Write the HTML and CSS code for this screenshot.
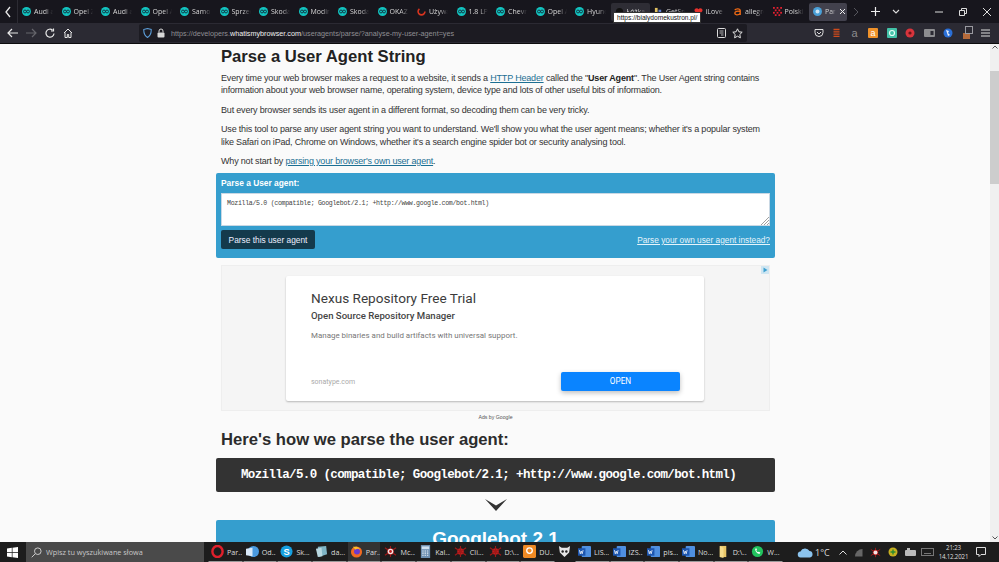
FILE: index.html
```html
<!DOCTYPE html>
<html lang="pl">
<head>
<meta charset="utf-8">
<title>Parse a User Agent String</title>
<link rel="stylesheet" href="styles.css">
</head>
<body>
<svg class="defs" width="0" height="0">
  <symbol id="fav" viewBox="0 0 10 10"><circle cx="5" cy="5" r="5" fill="#12c4c0"/><circle cx="3.3" cy="5" r="1.6" fill="none" stroke="#123" stroke-width=".9"/><circle cx="6.7" cy="5" r="1.6" fill="none" stroke="#123" stroke-width=".9"/></symbol>
  <symbol id="word" viewBox="0 0 14 14"><rect x="4" y="1" width="10" height="12" rx="1" fill="#4f8fe0"/><rect x="0" y="3.5" width="8" height="8" fill="#1d56b0"/><path d="M1.500 5.500l1 4 1-3 1 3 1-4" fill="none" stroke="#fff" stroke-width=".8"/></symbol>
  <symbol id="bug" viewBox="0 0 14 14"><circle cx="7" cy="7" r="3.500" fill="#c21f1f"/><path d="M1 3l12 8M1 11L13 3M7 1v12" stroke="#a01818" stroke-width="1.200"/></symbol>
</svg>

<header class="tabbar">
  <svg class="tab-back" width="8" height="12" viewBox="0 0 8 12"><path d="M6 1L2 6l4 5" fill="none" stroke="#e8e8e8" stroke-width="1.300"/></svg>
  <div class="tabs">
    <div class="tab"><svg class="fav"><use href="#fav"/></svg><span>Audi a</span></div>
    <div class="tab"><svg class="fav"><use href="#fav"/></svg><span>Opel Z</span></div>
    <div class="tab"><svg class="fav"><use href="#fav"/></svg><span>Audi a</span></div>
    <div class="tab"><svg class="fav"><use href="#fav"/></svg><span>Opel A</span></div>
    <div class="tab"><svg class="fav"><use href="#fav"/></svg><span>Samoc</span></div>
    <div class="tab"><svg class="fav"><use href="#fav"/></svg><span>Sprzed</span></div>
    <div class="tab"><svg class="fav"><use href="#fav"/></svg><span>Skoda</span></div>
    <div class="tab"><svg class="fav"><use href="#fav"/></svg><span>Modin</span></div>
    <div class="tab"><svg class="fav"><use href="#fav"/></svg><span>Skoda</span></div>
    <div class="tab"><svg class="fav"><use href="#fav"/></svg><span>OKAZ</span></div>
    <div class="tab"><svg class="fav" viewBox="0 0 10 10"><circle cx="5" cy="5" r="3.800" fill="none" stroke="#d8341f" stroke-width="1.800" stroke-dasharray="15 9"/></svg><span>Używa</span></div>
    <div class="tab"><svg class="fav"><use href="#fav"/></svg><span>1.8 LP</span></div>
    <div class="tab"><svg class="fav"><use href="#fav"/></svg><span>Chevr</span></div>
    <div class="tab"><svg class="fav"><use href="#fav"/></svg><span>Opel A</span></div>
    <div class="tab"><svg class="fav"><use href="#fav"/></svg><span>Hyund</span></div>
    <div class="tab tab-hover"><svg class="fav" viewBox="0 0 10 10"><circle cx="5" cy="5" r="4" fill="#111"/></svg><span>Łóżka</span></div>
    <div class="tab"><svg class="fav" viewBox="0 0 10 10"><rect x="1" y="1" width="3" height="8" fill="#e0c060"/><rect x="5" y="3" width="3" height="6" fill="#6080d0"/></svg><span>GetSn</span></div>
    <div class="tab"><svg class="fav" viewBox="0 0 10 10"><path d="M5 9L1 5a2.300 2.300 0 0 1 4-2.500A2.300 2.300 0 0 1 9 5z" fill="#e5322d"/></svg><span>iLove</span></div>
    <div class="tab"><svg class="fav" viewBox="0 0 10 10"><path d="M2 3.500C3 1.500 8 1.500 8 4v5M8 5C5 4 2 5 2 7s4 2.500 6 0" fill="none" stroke="#ef6a14" stroke-width="1.500"/></svg><span>allegro</span></div>
    <div class="tab"><svg class="fav" viewBox="0 0 10 10"><g fill="#e02030"><rect x="0" y="0" width="2" height="2"/><rect x="4" y="0" width="2" height="2"/><rect x="8" y="0" width="2" height="2"/><rect x="2" y="2.700" width="2" height="2"/><rect x="6" y="2.700" width="2" height="2"/><rect x="0" y="5.400" width="2" height="2"/><rect x="4" y="5.400" width="2" height="2"/><rect x="8" y="5.400" width="2" height="2"/><rect x="2" y="8" width="2" height="2"/><rect x="6" y="8" width="2" height="2"/></g></svg><span>Polski</span></div>
    <div class="tab tab-active"><svg class="fav" viewBox="0 0 10 10"><circle cx="5" cy="5" r="5" fill="#4aa0d8"/><circle cx="5" cy="5" r="2.200" fill="#cfe6f5"/></svg><span>Par</span><svg class="tab-x" width="7" height="7" viewBox="0 0 7 7"><path d="M1 1l5 5M6 1L1 6" stroke="#eee" stroke-width="1"/></svg></div>
  </div>
  <div class="tab-tools">
    <svg width="6" height="10" viewBox="0 0 6 10"><path d="M1 1l4 4-4 4" fill="none" stroke="#55555c" stroke-width="1"/></svg>
    <svg width="9" height="9" viewBox="0 0 9 9"><path d="M4.500 0v9M0 4.500h9" stroke="#eee" stroke-width="1.200"/></svg>
    <svg width="8" height="6" viewBox="0 0 8 6"><path d="M1 1l3 3 3-3" fill="none" stroke="#ddd" stroke-width="1.100"/></svg>
  </div>
  <div class="win-controls">
    <svg width="8" height="8" viewBox="0 0 8 8"><path d="M0 4h8" stroke="#ddd"/></svg>
    <svg width="8" height="8" viewBox="0 0 8 8"><path d="M.5 2.500h5v5h-5zM2.500 2V.5h5v5H6" fill="none" stroke="#ddd"/></svg>
    <svg width="8" height="8" viewBox="0 0 8 8"><path d="M0 0l8 8M8 0L0 8" stroke="#ddd"/></svg>
  </div>
</header>

<nav class="toolbar">
  <div class="nav-btns">
    <svg width="11" height="10" viewBox="0 0 11 10"><path d="M5 1L1 5l4 4M1 5h10" fill="none" stroke="#e8e8e8" stroke-width="1.200"/></svg>
    <svg width="11" height="10" viewBox="0 0 11 10"><path d="M6 1l4 4-4 4M10 5H0" fill="none" stroke="#66666c" stroke-width="1.200"/></svg>
    <svg width="10" height="10" viewBox="0 0 10 10"><path d="M9 5.500A4 4 0 1 1 7.500 2M8.500 .5v2.500H6" fill="none" stroke="#e8e8e8" stroke-width="1.200"/></svg>
    <svg width="10" height="10" viewBox="0 0 10 10"><path d="M1 5l4-4 4 4M2 4.500V9.500h2.300V6.500h1.400v3H8V4.500" fill="none" stroke="#e8e8e8" stroke-width="1"/></svg>
  </div>
  <div class="urlbar">
    <svg class="shield" width="9" height="10" viewBox="0 0 9 10"><path d="M.8 1.500L4.500.5l3.700 1c.2 3.500-.8 6.200-3.700 8C1.600 7.700.6 5 .8 1.500z" fill="none" stroke="#5b9bd5" stroke-width="1.100"/></svg>
    <svg class="lock" width="8" height="10" viewBox="0 0 8 10"><rect x=".5" y="4.500" width="7" height="5" rx="1" fill="#d8d8d8"/><path d="M2 4.500V3a2 2 0 0 1 4 0v1.500" fill="none" stroke="#d8d8d8"/></svg>
    <span class="url">https://developers.<b>whatismybrowser.com</b>/useragents/parse/?analyse-my-user-agent=yes</span>
    <svg class="reader" width="9" height="10" viewBox="0 0 9 10"><rect x=".5" y=".5" width="8" height="9" rx="1" fill="none" stroke="#ddd"/><path d="M2.500 3h4M2.500 5h4M4 7h2.500" stroke="#ddd" stroke-width=".8"/></svg>
    <svg class="star" width="11" height="11" viewBox="0 0 11 11"><path d="M5.500.8l1.400 3 3.300.4-2.400 2.300.6 3.300-2.900-1.600-2.900 1.600.6-3.300L.8 4.200l3.300-.4z" fill="none" stroke="#e6e6e6"/></svg>
  </div>
  <div class="extensions">
    <svg width="10" height="10" viewBox="0 0 10 10"><path d="M1 1.500h8v3a4 4 0 0 1-8 0z" fill="none" stroke="#ddd"/><path d="M3 4l2 2 2-2" fill="none" stroke="#ddd"/></svg>
    <svg width="9" height="10" viewBox="0 0 9 10"><path d="M1.500 1.500h6M1.500 3.800h6M1.500 6.100h6M1.500 8.400h6" stroke="#cf4b1c" stroke-width="1.300"/></svg>
    <span class="ext-a">a</span>
    <span class="ext-box ext-orange">a</span>
    <svg width="10" height="10" viewBox="0 0 10 10"><rect width="10" height="10" rx="1" fill="#43c2a8"/><circle cx="5" cy="5" r="2.500" fill="none" stroke="#e8fff8" stroke-width="1.200"/></svg>
    <svg width="10" height="10" viewBox="0 0 10 10"><circle cx="5" cy="5" r="4.500" fill="#d8343c"/><circle cx="5" cy="5" r="1.600" fill="#6a1418"/></svg>
    <svg width="11" height="8" viewBox="0 0 11 8"><rect width="11" height="8" rx="1" fill="#8d8d90"/><rect x="6.500" y="2" width="3" height="4" fill="#2b2a33"/></svg>
    <svg width="10" height="10" viewBox="0 0 10 10"><circle cx="5" cy="5" r="4.500" fill="#2a6fd6"/><path d="M3 2l3 1-1 2 2 2-2 1-1-3z" fill="#e6eefc"/></svg>
    <svg width="11" height="14" viewBox="0 0 11 14"><rect x="1" y="7" width="7" height="6" fill="#b56a3a"/><rect x="3.500" y=".5" width="7" height="7" fill="none" stroke="#9a9aa0"/></svg>
    <svg class="menu" width="9" height="8" viewBox="0 0 9 8"><path d="M0 1h9M0 4h9M0 7h9" stroke="#ddd" stroke-width="1.100"/></svg>
  </div>
</nav>

<div class="viewport">
  <main class="page">
    <h1>Parse a User Agent String</h1>
    <p>Every time your web browser makes a request to a website, it sends a <a href="#">HTTP Header</a> called the "<b>User Agent</b>". The User Agent string contains information about your web browser name, operating system, device type and lots of other useful bits of information.</p>
    <p>But every browser sends its user agent in a different format, so decoding them can be very tricky.</p>
    <p>Use this tool to parse any user agent string you want to understand. We'll show you what the user agent means; whether it's a popular system like Safari on iPad, Chrome on Windows, whether it's a search engine spider bot or security analysing tool.</p>
    <p>Why not start by <a href="#">parsing your browser's own user agent</a>.</p>

    <form class="parser">
      <label class="parser-label">Parse a User agent:</label>
      <div class="ua-input">Mozilla/5.0 (compatible; Googlebot/2.1; +http://www.google.com/bot.html)
        <svg class="grip" width="8" height="8" viewBox="0 0 8 8"><path d="M8 0L0 8M8 3L3 8M8 6L6 8" stroke="#888" stroke-width=".8"/></svg>
      </div>
      <div class="parser-actions">
        <button class="parse-btn" type="button">Parse this user agent</button>
        <a class="own-link" href="#">Parse your own user agent instead?</a>
      </div>
    </form>

    <section class="ad">
      <svg class="ad-badge" width="8" height="8" viewBox="0 0 8 8"><rect width="8" height="8" fill="#cfe6f2"/><path d="M2.500 1.500L6.500 4l-4 2.500z" fill="#3fa0d0"/></svg>
      <div class="ad-card">
        <div class="ad-title">Nexus Repository Free Trial</div>
        <div class="ad-sub">Open Source Repository Manager</div>
        <div class="ad-desc">Manage binaries and build artifacts with universal support.</div>
        <div class="ad-foot">
          <span class="ad-domain">sonatype.com</span>
          <span class="ad-open">OPEN</span>
        </div>
      </div>
    </section>
    <div class="ad-note">Ads by Google</div>

    <h2>Here's how we parse the user agent:</h2>
    <div class="ua-dark">Mozilla/5.0 (compatible; Googlebot/2.1; +http://www.google.com/bot.html)</div>
    <svg class="chevron" width="22" height="12" viewBox="0 0 22 12"><path d="M0 0l11 6.500L22 0 11 12z" fill="#333"/></svg>
    <div class="result">Googlebot 2.1</div>
  </main>
  <aside class="scrollbar">
    <svg class="scroll-arrow" width="6" height="4" viewBox="0 0 6 4"><path d="M.5 3.500L3 1l2.500 2.500" fill="none" stroke="#555"/></svg>
    <span class="scroll-thumb"></span>
    <svg class="scroll-arrow scroll-arrow-end" width="6" height="4" viewBox="0 0 6 4"><path d="M.5.5L3 3 5.500.5" fill="none" stroke="#555"/></svg>
  </aside>
</div>

<footer class="taskbar">
  <svg class="start" width="11" height="11" viewBox="0 0 11 11"><path d="M0 1.500L4.800.8v4.400H0zM5.500.7L11 0v5.200H5.500zM0 5.900h4.800v4.300L0 9.500zM5.500 5.900H11V11l-5.500-.8z" fill="#fff"/></svg>
  <div class="search">
    <svg width="11" height="11" viewBox="0 0 11 11"><circle cx="6.800" cy="4.200" r="3.300" fill="none" stroke="#ccc"/><path d="M4.300 6.700L.7 10.300" stroke="#ccc"/></svg>
    <span>Wpisz tu wyszukiwane słowa</span>
  </div>
  <div class="task-items">
    <div class="task"><svg viewBox="0 0 14 14"><ellipse cx="7" cy="7" rx="5.500" ry="6" fill="none" stroke="#e0202c" stroke-width="2.600"/></svg><span>Par...</span></div>
    <div class="task"><svg viewBox="0 0 14 14"><circle cx="8" cy="7" r="6" fill="#4a9ae0"/><path d="M0 4l7-1v9l-7-1z" fill="#d8e8f8"/></svg><span>Od...</span></div>
    <div class="task"><svg viewBox="0 0 14 14"><circle cx="7" cy="7" r="6.500" fill="#16a0e0"/><text x="7" y="10.500" text-anchor="middle" class="svg-s">S</text></svg><span>Sk...</span></div>
    <div class="task"><svg viewBox="0 0 14 14"><path d="M3 2l9-1 1 9-9 3z" fill="#7fb4c4"/><path d="M1 4l6-1 1 9-5 1z" fill="#b8d8e0"/></svg><span>da...</span></div>
    <div class="task task-on"><svg viewBox="0 0 14 14"><circle cx="7" cy="7.500" r="6" fill="#f26a21"/><circle cx="7.500" cy="7" r="3.200" fill="#6a3ad0"/><path d="M3 2c2 0 6-1 8 3-2-1.500-4-1-5 0z" fill="#fcbf2a"/></svg><span>Par...</span></div>
    <div class="task"><svg viewBox="0 0 14 14"><use href="#bug"/><circle cx="7" cy="7" r="3" fill="#f4e4e4"/><circle cx="7" cy="7" r="1.500" fill="#c21f1f"/></svg><span>Mc...</span></div>
    <div class="task"><svg viewBox="0 0 14 14"><rect x="2" y="0" width="10" height="14" fill="#6d8fb0"/><rect x="3" y="1.500" width="8" height="3" fill="#cfe0f0"/><path d="M3.500 6.500h7M3.500 8.800h7M3.500 11h7" stroke="#e6eef6" stroke-width="1.200" stroke-dasharray="1.500 1"/></svg><span>Kal...</span></div>
    <div class="task"><svg viewBox="0 0 14 14"><use href="#bug"/></svg><span>Cli...</span></div>
    <div class="task"><svg viewBox="0 0 14 14"><use href="#bug"/></svg><span>D:\...</span></div>
    <div class="task"><svg viewBox="0 0 14 14"><rect width="14" height="14" rx="1.500" fill="#f08a24"/><circle cx="7" cy="6" r="3" fill="none" stroke="#fff" stroke-width="1.400"/></svg><span>DU...</span></div>
    <div class="task task-solo"><svg viewBox="0 0 14 14"><path d="M1 1l3 2h6l3-2-1 7-5 5-5-5z" fill="#e6e6e6"/><circle cx="5" cy="7" r="1.300" fill="#222"/><circle cx="9" cy="7" r="1.300" fill="#222"/></svg></div>
    <div class="task"><svg viewBox="0 0 14 14"><use href="#word"/></svg><span>LIS...</span></div>
    <div class="task"><svg viewBox="0 0 14 14"><use href="#word"/></svg><span>IZS...</span></div>
    <div class="task"><svg viewBox="0 0 14 14"><use href="#word"/></svg><span>pis...</span></div>
    <div class="task"><svg viewBox="0 0 14 14"><use href="#word"/></svg><span>No...</span></div>
    <div class="task"><svg viewBox="0 0 14 14"><path d="M3 1h7v12H3z" fill="#e8c668"/><path d="M3 1l4 2v11l-4-1z" fill="#f5dc8c"/></svg><span>D:\...</span></div>
    <div class="task"><svg viewBox="0 0 14 14"><circle cx="7" cy="7" r="6" fill="#22c35e"/><path d="M4.500 4c0 3 2 5.500 5 5.500l.5-1.500-1.800-.8-.7.7c-.9-.4-1.500-1.200-1.800-2l.7-.7L5.800 3.500z" fill="#fff"/></svg><span>W...</span></div>
  </div>
  <div class="tray">
    <svg class="cloud" width="17" height="11" viewBox="0 0 17 11"><path d="M4 10.500a3 3 0 0 1-.5-6A5 5 0 0 1 12.500 4 3.300 3.300 0 0 1 13 10.500z" fill="#8cc4ee"/></svg>
    <span class="temp">1°C</span>
    <svg class="caret" width="8" height="5" viewBox="0 0 8 5"><path d="M.5 4.500L4 1l3.500 3.500" fill="none" stroke="#ddd"/></svg>
    <svg width="9" height="9" viewBox="0 0 9 9"><path d="M1 8.500A7.500 7.500 0 0 1 8.500 1v7.500z" fill="#666"/></svg>
    <svg width="11" height="11" viewBox="0 0 14 14"><use href="#bug"/><circle cx="7" cy="7" r="2.500" fill="#f4e4e4"/></svg>
    <svg width="10" height="10" viewBox="0 0 10 10"><circle cx="5" cy="5" r="4.500" fill="#c8b020"/><path d="M5 2.500v5M2.500 5h5" stroke="#2a8a30" stroke-width="1.400"/></svg>
    <svg width="11" height="8" viewBox="0 0 11 8"><rect y="2" width="11" height="6" rx="1" fill="#bbb"/><rect x="2" y="0" width="3" height="2" fill="#bbb"/></svg>
    <svg class="kbd" width="13" height="8" viewBox="0 0 13 8"><rect x=".5" y=".5" width="12" height="7" fill="none" stroke="#777"/><path d="M3 5.500h7" stroke="#777"/></svg>
    <div class="clock"><span>21:23</span><span>14.12.2021</span></div>
    <svg class="notify" width="10" height="10" viewBox="0 0 10 10"><path d="M.5.500h9v7H5L3 9.500v-2H.5z" fill="none" stroke="#ddd"/></svg>
  </div>
</footer>

<div class="tooltip">https://bialydomekustron.pl/</div>
</body>
</html>
```

FILE: styles.css
```css
* { box-sizing: border-box; }
html, body { margin: 0; height: 100%; }
body {
  position: relative;
  width: 999px;
  height: 562px;
  overflow: hidden;
  display: flex;
  flex-direction: column;
  font-family: "Liberation Sans", Arial, sans-serif;
  background: #fafafa;
  color: #333;
}
.defs { position: absolute; }
svg { display: block; flex: none; }

/* Tab strip */
.tabbar {
  height: 23px;
  flex: none;
  display: flex;
  align-items: center;
  background: #17161d;
  color: #d8d8d8;
  font-family: "Open Sans", sans-serif;
  font-size: 7px;
}
.tab-back { margin: 0 5px 0 4px; }
.tabs { display: flex; align-items: center; height: 100%; border-left: 1px solid #2c2b33; }
.tab {
  width: 39.500px;
  height: 18px;
  display: flex;
  align-items: center;
  gap: 3px;
  padding-left: 4px;
  border-radius: 2px;
  overflow: hidden;
  white-space: nowrap;
}
.tab span { width: 19px; overflow: hidden; -webkit-mask-image: linear-gradient(90deg, #000 55%, transparent); mask-image: linear-gradient(90deg, #000 55%, transparent); }
.fav { width: 9px; height: 9px; }
.tab-hover { background: #2e2d35; }
.tab-active { background: #42414d; width: 38px; margin-left: 1px; }
.tab-active span { width: 11px; }
.tab-tools { display: flex; align-items: center; gap: 12px; margin-left: 6px; }
.win-controls { display: flex; align-items: center; gap: 16px; margin-left: auto; margin-right: 8px; }

/* Toolbar */
.toolbar {
  height: 21px;
  flex: none;
  display: flex;
  align-items: center;
  background: #2b2a33;
  border-bottom: 1px solid #0c0c0d;
}
.nav-btns { width: 139px; display: flex; align-items: center; gap: 8px; padding-left: 7px; }
.urlbar {
  width: 608px;
  height: 18px;
  display: flex;
  align-items: center;
  background: #1c1b22;
  border-radius: 2px;
  padding-left: 4px;
  padding-right: 4px;
}
.lock { margin-left: 5px; }
.url {
  margin-left: 6px;
  flex: 1;
  font-family: "Liberation Sans", sans-serif;
  font-size: 7.220px;
  color: #8f8f93;
  white-space: nowrap;
}
.url b { font-weight: 400; color: #f0f0f0; }
.star { margin-left: 6px; }
.extensions { flex: 1; display: flex; align-items: center; justify-content: flex-end; gap: 8.500px; padding-right: 9px; font-family: "Liberation Sans", sans-serif; }
.ext-a { color: #8d8d90; font-size: 11px; width: 10px; text-align: center; line-height: 10px; }
.ext-box { width: 10px; height: 10px; border-radius: 1px; font-size: 9px; line-height: 10px; text-align: center; }
.ext-orange { background: #f0922a; color: #fff; }

/* Page */
.viewport { flex: 1; min-height: 0; display: flex; overflow: hidden; background: #fafafa; }
.page { width: 559px; margin-left: 216px; flex: none; }
.scrollbar {
  width: 9px;
  margin-left: auto;
  padding-top: 27px;
  position: relative;
  background: #f0f0f0;
}
.scroll-thumb { display: block; height: 113px; background: #cdcdcd; }
.scroll-arrow { position: absolute; left: 1.500px; top: 1px; }
.scroll-arrow-end { top: auto; bottom: 2px; }

h1 { margin: 0; padding: 2px 5px 0; font-size: 16.650px; line-height: 21px; color: #222; }
p { margin: 0 0 6.500px; padding: 0 5px; font-size: 9px; letter-spacing: -.18px; line-height: 12.800px; color: #333; }
h1 + p { margin-top: 4.500px; }
a { color: #1c6f93; }
p b { color: #222; }

.parser {
  height: 85px;
  margin-top: -1px;
  padding: 5px 5px 0;
  background: #359ece;
  border-radius: 2px;
}
.parser-label { display: block; color: #fff; font-weight: 700; font-size: 8.400px; line-height: 11px; }
.ua-input {
  position: relative;
  margin-top: 4px;
  height: 33px;
  padding: 5px;
  background: #fff;
  border: 1px solid #c9d8e4;
  font-family: "Liberation Mono", monospace;
  font-size: 6.600px;
  letter-spacing: -.32px;
  line-height: 9px;
  color: #444;
}
.grip { position: absolute; right: 0; bottom: 0; }
.parser-actions { margin-top: 4px; display: flex; justify-content: space-between; align-items: center; }
.parse-btn {
  width: 94px;
  height: 19px;
  padding: 0;
  background: #143a4c;
  border: 0;
  border-radius: 2px;
  color: #eef;
  font-family: "Liberation Sans", sans-serif;
  font-size: 8.350px;
}
.own-link { color: #e6f4fb; font-size: 8.300px; }

.ad {
  position: relative;
  margin: 7px 5px 0;
  height: 146px;
  padding-top: 10px;
  background: #f5f5f5;
  border: 1px solid #eeeeee;
}
.ad-badge { position: absolute; right: 0; top: 0; }
.ad-card {
  width: 418px;
  height: 125px;
  margin-left: 64px;
  padding: 14px 25px 0;
  background: #fff;
  border-radius: 2px;
  box-shadow: 0 1px 2px rgba(0,0,0,.25);
  display: flex;
  flex-direction: column;
  font-family: "Roboto", sans-serif;
}
.ad-title { font-size: 13.600px; line-height: 16px; color: #3c3c3c; }
.ad-sub { margin-top: 4px; font-size: 9.600px; line-height: 12px; font-weight: 500; color: #444; }
.ad-desc { margin-top: 8px; font-size: 7.950px; line-height: 11px; color: #777; }
.ad-foot { margin-top: auto; margin-bottom: 10px; display: flex; justify-content: space-between; align-items: center; }
.ad-domain { font-size: 7px; color: #aaa; }
.ad-open {
  width: 119px;
  height: 19px;
  margin-right: -1px;
  line-height: 19px;
  text-align: center;
  background: #0a84ff;
  border-radius: 2px;
  color: #fff;
  font-size: 8.200px;
  box-shadow: 0 2px 5px rgba(0,0,0,.25);
}
.ad-note { margin-top: 2px; text-align: center; font-size: 5.200px; line-height: 8px; color: #555; }

h2 { margin: 8px 0 0; padding: 0 5px; font-size: 16.650px; line-height: 21px; color: #2c2c2c; }
.ua-dark {
  margin-top: 8px;
  height: 34px;
  padding-right: 14px;
  line-height: 34px;
  text-align: center;
  background: #333;
  border-radius: 2px;
  color: #fff;
  font-family: "Liberation Mono", monospace;
  font-weight: 700;
  font-size: 12.500px;
  letter-spacing: -.625px;
  white-space: nowrap;
}
.chevron { margin: 7px auto 9px; }
.result {
  height: 60px;
  padding-top: 6px;
  text-align: center;
  background: #359ece;
  color: #fff;
  font-size: 19px;
  line-height: 26px;
  font-weight: 700;
  border-radius: 2px 2px 0 0;
}

/* Taskbar */
.taskbar {
  height: 20px;
  flex: none;
  display: flex;
  align-items: center;
  background: #1d1d1d;
  color: #dcdcdc;
  font-family: "Open Sans", sans-serif;
  font-size: 7.200px;
}
.start { margin-left: 7px; margin-right: 8px; }
.search {
  width: 178px;
  height: 100%;
  display: flex;
  align-items: center;
  gap: 4px;
  padding-left: 5px;
  background: #4a4a4a;
  color: #c8c8c8;
  font-size: 7.300px;
}
.task-items { display: flex; height: 100%; margin-left: 4px; }
.task {
  width: 34.700px;
  height: 100%;
  display: flex;
  align-items: center;
  gap: 3px;
  padding-left: 2px;
  border-bottom: 1px solid #9a9a9a;
  border-left: 1px solid #1d1d1d;
  border-right: 1px solid #1d1d1d;
  white-space: nowrap;
  overflow: hidden;
}
.task svg { width: 13px; height: 13px; }
.task-on { background: #333; }
.task-solo { width: 20px; border-bottom-color: transparent; }
.svg-s { fill: #fff; font-family: "Liberation Sans", sans-serif; font-size: 10px; font-weight: 700; }
.tray { flex: 1; display: flex; align-items: center; padding-left: 14px; padding-right: 13px; }
.temp { margin-left: 1px; font-size: 9px; }
.caret { margin-left: 9px; }
.tray > svg + svg { margin-left: 7px; }
.tray > .kbd { margin-left: 5px; }
.clock { margin-left: 5px; display: flex; flex-direction: column; align-items: center; font-size: 6.200px; letter-spacing: -.2px; line-height: 9.500px; }
.tray > .notify { margin-left: auto; }

/* Tooltip */
.tooltip {
  position: absolute;
  left: 613px;
  top: 12px;
  height: 11px;
  padding: 0 3px;
  background: #fff;
  border: 1px solid #333;
  color: #111;
  font-family: "Liberation Sans", sans-serif;
  font-size: 6.600px;
  line-height: 9px;
  white-space: nowrap;
}
```
